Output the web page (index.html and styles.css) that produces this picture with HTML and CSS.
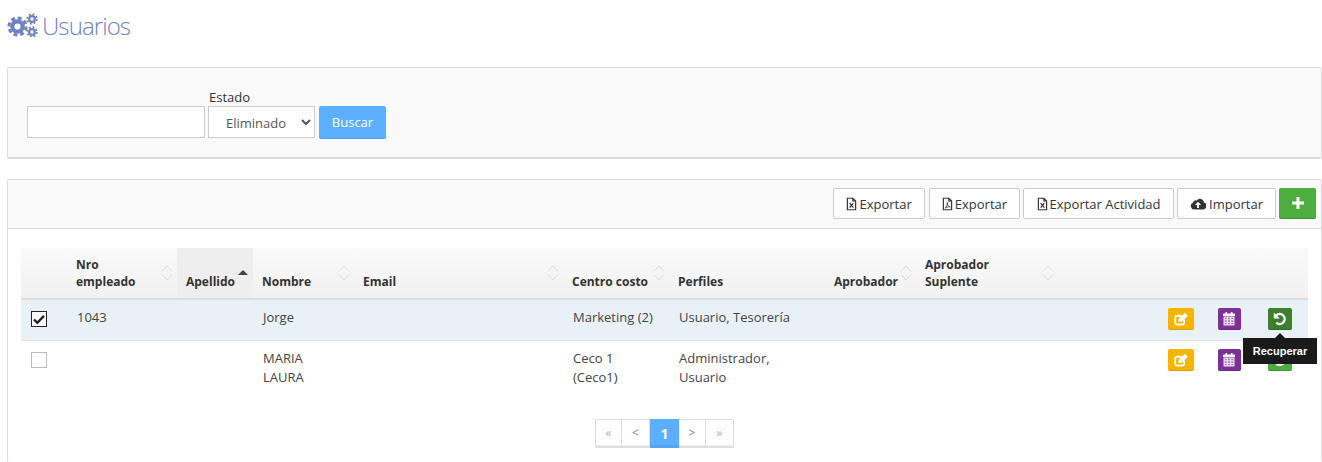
FILE: index.html
```html
<!DOCTYPE html>
<html lang="es">
<head>
<meta charset="utf-8">
<title>Usuarios</title>
<link rel="stylesheet" href="styles.css">
</head>
<body>
<svg class="defs" width="0" height="0" aria-hidden="true">
  <defs>
    <symbol id="i-sort" viewBox="0 0 12 18">
      <path d="M1 7.500 6 2l5 5.500M1 10.500 6 16l5-5.500" fill="none" stroke="#d8d8d8" stroke-width="1"/>
    </symbol>
    <symbol id="i-xls" viewBox="0 0 12 14">
      <path d="M1.500.7h6l3 3v9.600h-9zM7.500.7v3h3" fill="none" stroke="#333" stroke-width="1.300"/>
      <path d="M4 6l4 5M8 6l-4 5" stroke="#333" stroke-width="1.400"/>
    </symbol>
    <symbol id="i-pdf" viewBox="0 0 12 14">
      <path d="M1.500.7h6l3 3v9.600h-9zM7.500.7v3h3" fill="none" stroke="#333" stroke-width="1.300"/>
      <path d="M3.500 11.500C5 10 6 7.500 5.700 5.500 6 8 7 9.700 9 10.200 7 9.800 5 10.500 3.500 11.500z" fill="none" stroke="#333" stroke-width=".9"/>
    </symbol>
    <symbol id="i-edit" viewBox="0 0 14 14">
      <path d="M10 7.500v3.300a1.700 1.700 0 0 1-1.700 1.700H3A1.700 1.700 0 0 1 1.200 10.800V5.500A1.700 1.700 0 0 1 3 3.800h4.500" fill="none" stroke="#fff" stroke-width="1.900"/>
      <path d="M4.500 10V7L10.800 .7 13.800 3.700 7.500 10z" fill="#fff"/>
    </symbol>
    <symbol id="i-cal" viewBox="0 0 14 14">
      <path d="M3.500 0h1.600v2.500H3.500zM8.900 0h1.600v2.500H8.900z" fill="#fff"/>
      <path d="M2 1.500h10a1 1 0 0 1 1 1V4H1V2.500a1 1 0 0 1 1-1z" fill="#fff"/>
      <path d="M1.500 4.500h11v8.500a.5.500 0 0 1-.5.500H2a.5.500 0 0 1-.5-.5z" fill="#fff" fill-opacity=".85"/>
      <path d="M2.800 5.700h1.900v1.600H2.800zM6 5.700h2v1.600H6zM9.300 5.700h1.900v1.600H9.300zM2.800 8.300h1.900v1.600H2.800zM6 8.300h2v1.600H6zM9.300 8.300h1.900v1.600H9.300zM2.800 10.900h1.900v1.400H2.800zM6 10.900h2v1.400H6zM9.300 10.900h1.900v1.400H9.300z" fill="#7d3097" fill-opacity=".6"/>
    </symbol>
    <symbol id="i-undo" viewBox="0 0 14 14">
      <path d="M3.300 3.300A5 5 0 1 1 3.300 10.700" fill="none" stroke="#fff" stroke-width="2.400"/>
      <path d="M.8 .6v6h6z" fill="#fff"/>
    </symbol>
  </defs>
</svg>

<main class="page">
  <h1 class="title">
    <svg class="title-icon" viewBox="0 0 32 24" width="32" height="24" aria-hidden="true">
      <g fill="none" stroke="#6f83c2">
        <circle cx="10.500" cy="13.500" r="5.200" stroke-width="4.200"/>
        <circle cx="10.500" cy="13.500" r="8.600" stroke-width="3" stroke-dasharray="3.900 2.850"/>
        <circle cx="25" cy="6" r="2.800" stroke-width="2.200"/>
        <circle cx="25" cy="6" r="4.800" stroke-width="1.800" stroke-dasharray="1.900 1.870"/>
        <circle cx="25" cy="19" r="2.800" stroke-width="2.200"/>
        <circle cx="25" cy="19" r="4.800" stroke-width="1.800" stroke-dasharray="1.900 1.870"/>
      </g>
    </svg>
    <span>Usuarios</span>
  </h1>

  <section class="panel filter">
    <form class="filter-row">
      <input class="field search" type="text" aria-label="Buscar">
      <div class="state">
        <label class="state-label" for="estado">Estado</label>
        <select class="field state-select" id="estado">
          <option>Eliminado</option>
        </select>
      </div>
      <button class="search-btn" type="button">Buscar</button>
    </form>
  </section>

  <section class="panel results">
    <div class="toolbar">
      <button class="tool" type="button"><svg class="tool-icon"><use href="#i-xls"/></svg>Exportar</button>
      <button class="tool tool-wide" type="button"><svg class="tool-icon"><use href="#i-pdf"/></svg>Exportar</button>
      <button class="tool tool-activity" type="button"><svg class="tool-icon"><use href="#i-xls"/></svg>Exportar Actividad</button>
      <button class="tool" type="button">
        <svg class="tool-cloud" viewBox="0 0 16 12" aria-hidden="true">
          <path fill-rule="evenodd" d="M4 11.500A3.500 3.500 0 0 1 2.800 4.800 3.300 3.300 0 0 1 6.800 2.400 4 4 0 0 1 14 4.500 3.600 3.600 0 0 1 12.500 11.500zM8 3.800 4.800 7h2.200v3h2V7h2.200z" fill="#333"/>
        </svg>Importar</button>
      <button class="tool-add" type="button">
        <svg viewBox="0 0 12 12" width="12" height="12" aria-hidden="true"><path d="M4.500 0h3v4.500H12v3H7.500V12h-3V7.500H0v-3h4.500z" fill="#fff"/></svg>
      </button>
    </div>

    <div class="table-wrap">
      <table class="grid">
        <colgroup>
          <col class="c-check"><col class="c-nro"><col class="c-ape"><col class="c-nom"><col class="c-mail"><col class="c-cc"><col class="c-perf"><col class="c-apr"><col class="c-sup"><col class="c-gap"><col class="c-act"><col class="c-act"><col class="c-act">
        </colgroup>
        <thead>
          <tr>
            <th></th>
            <th class="sortable">Nro<br>empleado<svg class="sort"><use href="#i-sort"/></svg></th>
            <th class="sorted">Apellido<span class="sort-up"></span></th>
            <th class="sortable">Nombre<svg class="sort"><use href="#i-sort"/></svg></th>
            <th class="sortable">Email<svg class="sort"><use href="#i-sort"/></svg></th>
            <th class="sortable">Centro costo<svg class="sort"><use href="#i-sort"/></svg></th>
            <th>Perfiles</th>
            <th class="sortable">Aprobador<svg class="sort"><use href="#i-sort"/></svg></th>
            <th class="sortable">Aprobador<br>Suplente<svg class="sort"><use href="#i-sort"/></svg></th>
            <th></th><th></th><th></th><th></th>
          </tr>
        </thead>
        <tbody>
          <tr class="selected">
            <td><span class="check on"><svg viewBox="0 0 14 14" width="14" height="14" aria-hidden="true"><path d="M2 7.500 5.300 10.800 12 3.800" fill="none" stroke="#222" stroke-width="2.400"/></svg></span></td>
            <td>1043</td>
            <td></td>
            <td>Jorge</td>
            <td></td>
            <td>Marketing (2)</td>
            <td>Usuario, Tesorería</td>
            <td></td><td></td><td></td>
            <td class="act"><span class="icon-btn yellow"><svg><use href="#i-edit"/></svg></span></td>
            <td class="act"><span class="icon-btn purple"><svg><use href="#i-cal"/></svg></span></td>
            <td class="act">
              <span class="icon-btn green hover"><svg><use href="#i-undo"/></svg></span>
              <span class="tooltip">Recuperar</span>
            </td>
          </tr>
          <tr>
            <td><span class="check"></span></td>
            <td></td>
            <td></td>
            <td>MARIA<br>LAURA</td>
            <td></td>
            <td>Ceco 1<br>(Ceco1)</td>
            <td>Administrador,<br>Usuario</td>
            <td></td><td></td><td></td>
            <td class="act"><span class="icon-btn yellow"><svg><use href="#i-edit"/></svg></span></td>
            <td class="act"><span class="icon-btn purple"><svg><use href="#i-cal"/></svg></span></td>
            <td class="act"><span class="icon-btn green"><svg><use href="#i-undo"/></svg></span></td>
          </tr>
        </tbody>
      </table>
    </div>

    <nav class="pager" aria-label="Paginación">
      <span class="pg pg-first">«</span>
      <span class="pg pg-wide">&lt;</span>
      <span class="pg current">1</span>
      <span class="pg">&gt;</span>
      <span class="pg pg-last">»</span>
    </nav>
  </section>
</main>
</body>
</html>
```

FILE: styles.css
```css
html, body {
  margin: 0;
  padding: 0;
  height: 462px;
  overflow: hidden;
  background: #fff;
}

body {
  font-family: "Open Sans", "Liberation Sans", sans-serif;
  font-size: 13px;
  line-height: 19px;
  color: #444;
}

.defs { display: block; }

.page { padding: 0 0 0 7px; }

.title {
  display: flex;
  align-items: center;
  gap: 3px;
  height: 24px;
  margin: 0;
  padding: 13px 0 30px 0;
  font-size: 24px;
  font-weight: 300;
  letter-spacing: -.9px;
  color: #6f83c2;
}

.title-icon { flex: none; }

.panel {
  border: 1px solid #ddd;
  border-bottom-width: 2px;
  border-radius: 2px;
  background: #f9f9f9;
}

.filter { height: 89px; margin-bottom: 20px; }

.filter-row {
  display: flex;
  align-items: flex-start;
  padding: 38px 0 0 19px;
}

.field {
  box-sizing: border-box;
  height: 32px;
  border: 1px solid #ccc;
  background: #fff;
  font: inherit;
  color: #555;
}

.search { width: 178px; margin-right: 3px; }

.state { position: relative; }

.state-label {
  position: absolute;
  left: 1px;
  top: -18px;
  color: #333;
}

.state-select { width: 107px; padding: 1px 0 0 13px; display: block; }

.search-btn {
  box-sizing: border-box;
  width: 67px;
  height: 33px;
  margin-left: 4px;
  padding: 0;
  border: 0;
  border-bottom: 1px solid #4a9fee;
  border-radius: 2px;
  background: #5cafff;
  color: #fff;
  font: inherit;
}

.results { background: #fff; height: 282px; border-bottom: 0; }

.toolbar {
  display: flex;
  justify-content: flex-end;
  align-items: flex-start;
  gap: 3px;
  box-sizing: border-box;
  height: 49px;
  padding: 8px 5px 0 0;
  background: #f9f9f9;
  border-bottom: 1px solid #ddd;
}

.tool {
  display: flex;
  align-items: center;
  justify-content: center;
  gap: 2px;
  box-sizing: border-box;
  height: 31px;
  padding: 1px 12px 0;
  border: 1px solid #ccc;
  border-radius: 2px;
  background: #fff;
  color: #333;
  font: inherit;
}

.tool-wide { margin-left: 1px; }

.tool-activity { width: 151px; }

.tool-icon { width: 11px; height: 14px; }

.tool-cloud { width: 16px; height: 12px; margin-right: 1px; }

.tool-add {
  display: flex;
  align-items: center;
  justify-content: center;
  width: 37px;
  height: 31px;
  padding: 0;
  border: 0;
  border-bottom: 1px solid #3f9a33;
  border-radius: 2px;
  background: #4cae3f;
}

.table-wrap { padding: 19px 13px 0 13px; }

.grid {
  table-layout: fixed;
  width: 1287px;
  border-collapse: collapse;
}

.c-check { width: 46px; }
.c-nro { width: 110px; }
.c-ape { width: 76px; }
.c-nom { width: 101px; }
.c-mail { width: 209px; }
.c-cc { width: 106px; }
.c-perf { width: 156px; }
.c-apr { width: 91px; }
.c-sup { width: 142px; }
.c-gap { width: 100px; }
.c-act { width: 50px; }

.grid th {
  position: relative;
  box-sizing: border-box;
  height: 51px;
  padding: 0 20px 8px 9px;
  vertical-align: bottom;
  text-align: left;
  font-weight: 700;
  font-size: 12px;
  line-height: 17px;
  color: #333;
  background: linear-gradient(#fafafa, #f1f1f1);
  border-bottom: 2px solid #ddd;
}

.grid th.sorted { background: #eeeeee; padding-right: 0; }

.sort {
  position: absolute;
  right: 4px;
  top: 16px;
  width: 12px;
  height: 18px;
}

.sort-up {
  position: absolute;
  right: 5px;
  top: 22px;
  width: 0;
  height: 0;
  border-left: 5px solid transparent;
  border-right: 5px solid transparent;
  border-bottom: 5px solid #444;
}

.grid td {
  padding: 8px 10px 13px 10px;
  vertical-align: top;
  border-bottom: 1px solid #e4e4e4;
}

.grid tbody tr:last-child td { border-bottom: 0; }

.selected td { background: #e9f1f8; }

.check {
  display: block;
  box-sizing: border-box;
  width: 16px;
  height: 16px;
  margin-top: 3px;
  border: 1px solid #bbb;
  background: #fff;
}

.check.on {
  border-color: #222;
  display: flex;
  align-items: center;
  justify-content: center;
}

.grid td.act { position: relative; padding: 0; text-align: center; vertical-align: top; }

.icon-btn {
  display: inline-flex;
  align-items: center;
  justify-content: center;
  box-sizing: border-box;
  height: 22px;
  margin-top: 8px;
  border-radius: 2px;
}

.icon-btn svg { width: 14px; height: 14px; }

.yellow { width: 26px; background: #f5b400; border-bottom: 1px solid #dca200; margin-left: -4px; }
.purple { width: 23px; background: #7d3097; border-bottom: 1px solid #6d2886; margin-left: -8px; }
.green { width: 24px; background: #4cae3f; border-bottom: 1px solid #3f9a33; margin-left: -6px; }
.green.hover { background: #3d7f2e; border-bottom-color: #336b26; }

.tooltip {
  position: absolute;
  z-index: 2;
  left: -15px;
  top: 38px;
  width: 74px;
  height: 26px;
  background: #1a1a1a;
  color: #fff;
  font-family: "Liberation Sans", Arial, sans-serif;
  font-size: 11px;
  font-weight: 700;
  line-height: 26px;
  text-align: center;
}

.tooltip::before {
  content: "";
  position: absolute;
  left: 32px;
  top: -5px;
  border-left: 5px solid transparent;
  border-right: 5px solid transparent;
  border-bottom: 5px solid #1a1a1a;
}

.pager {
  display: flex;
  justify-content: center;
  margin-top: 19px;
}

.pg {
  box-sizing: border-box;
  width: 27px;
  height: 29px;
  border: 1px solid #ddd;
  border-left-width: 0;
  border-bottom: 2px solid #ddd;
  background: linear-gradient(#fff 25px, #f0f0f0 25px);
  text-align: center;
  color: #888;
  font-size: 12px;
  line-height: 26px;
}

.pg-wide { width: 28px; }
.pg-first { border-left-width: 1px; border-radius: 2px 0 0 2px; color: #c8a68f; }
.pg-last { width: 28px; border-radius: 0 2px 2px 0; color: #8fb8de; }

.current {
  width: 29px;
  border: 0;
  background: linear-gradient(#5cafff 26px, #55a4ee 26px);
  color: #fff;
  font-weight: 700;
  font-size: 14px;
  line-height: 29px;
}
```
